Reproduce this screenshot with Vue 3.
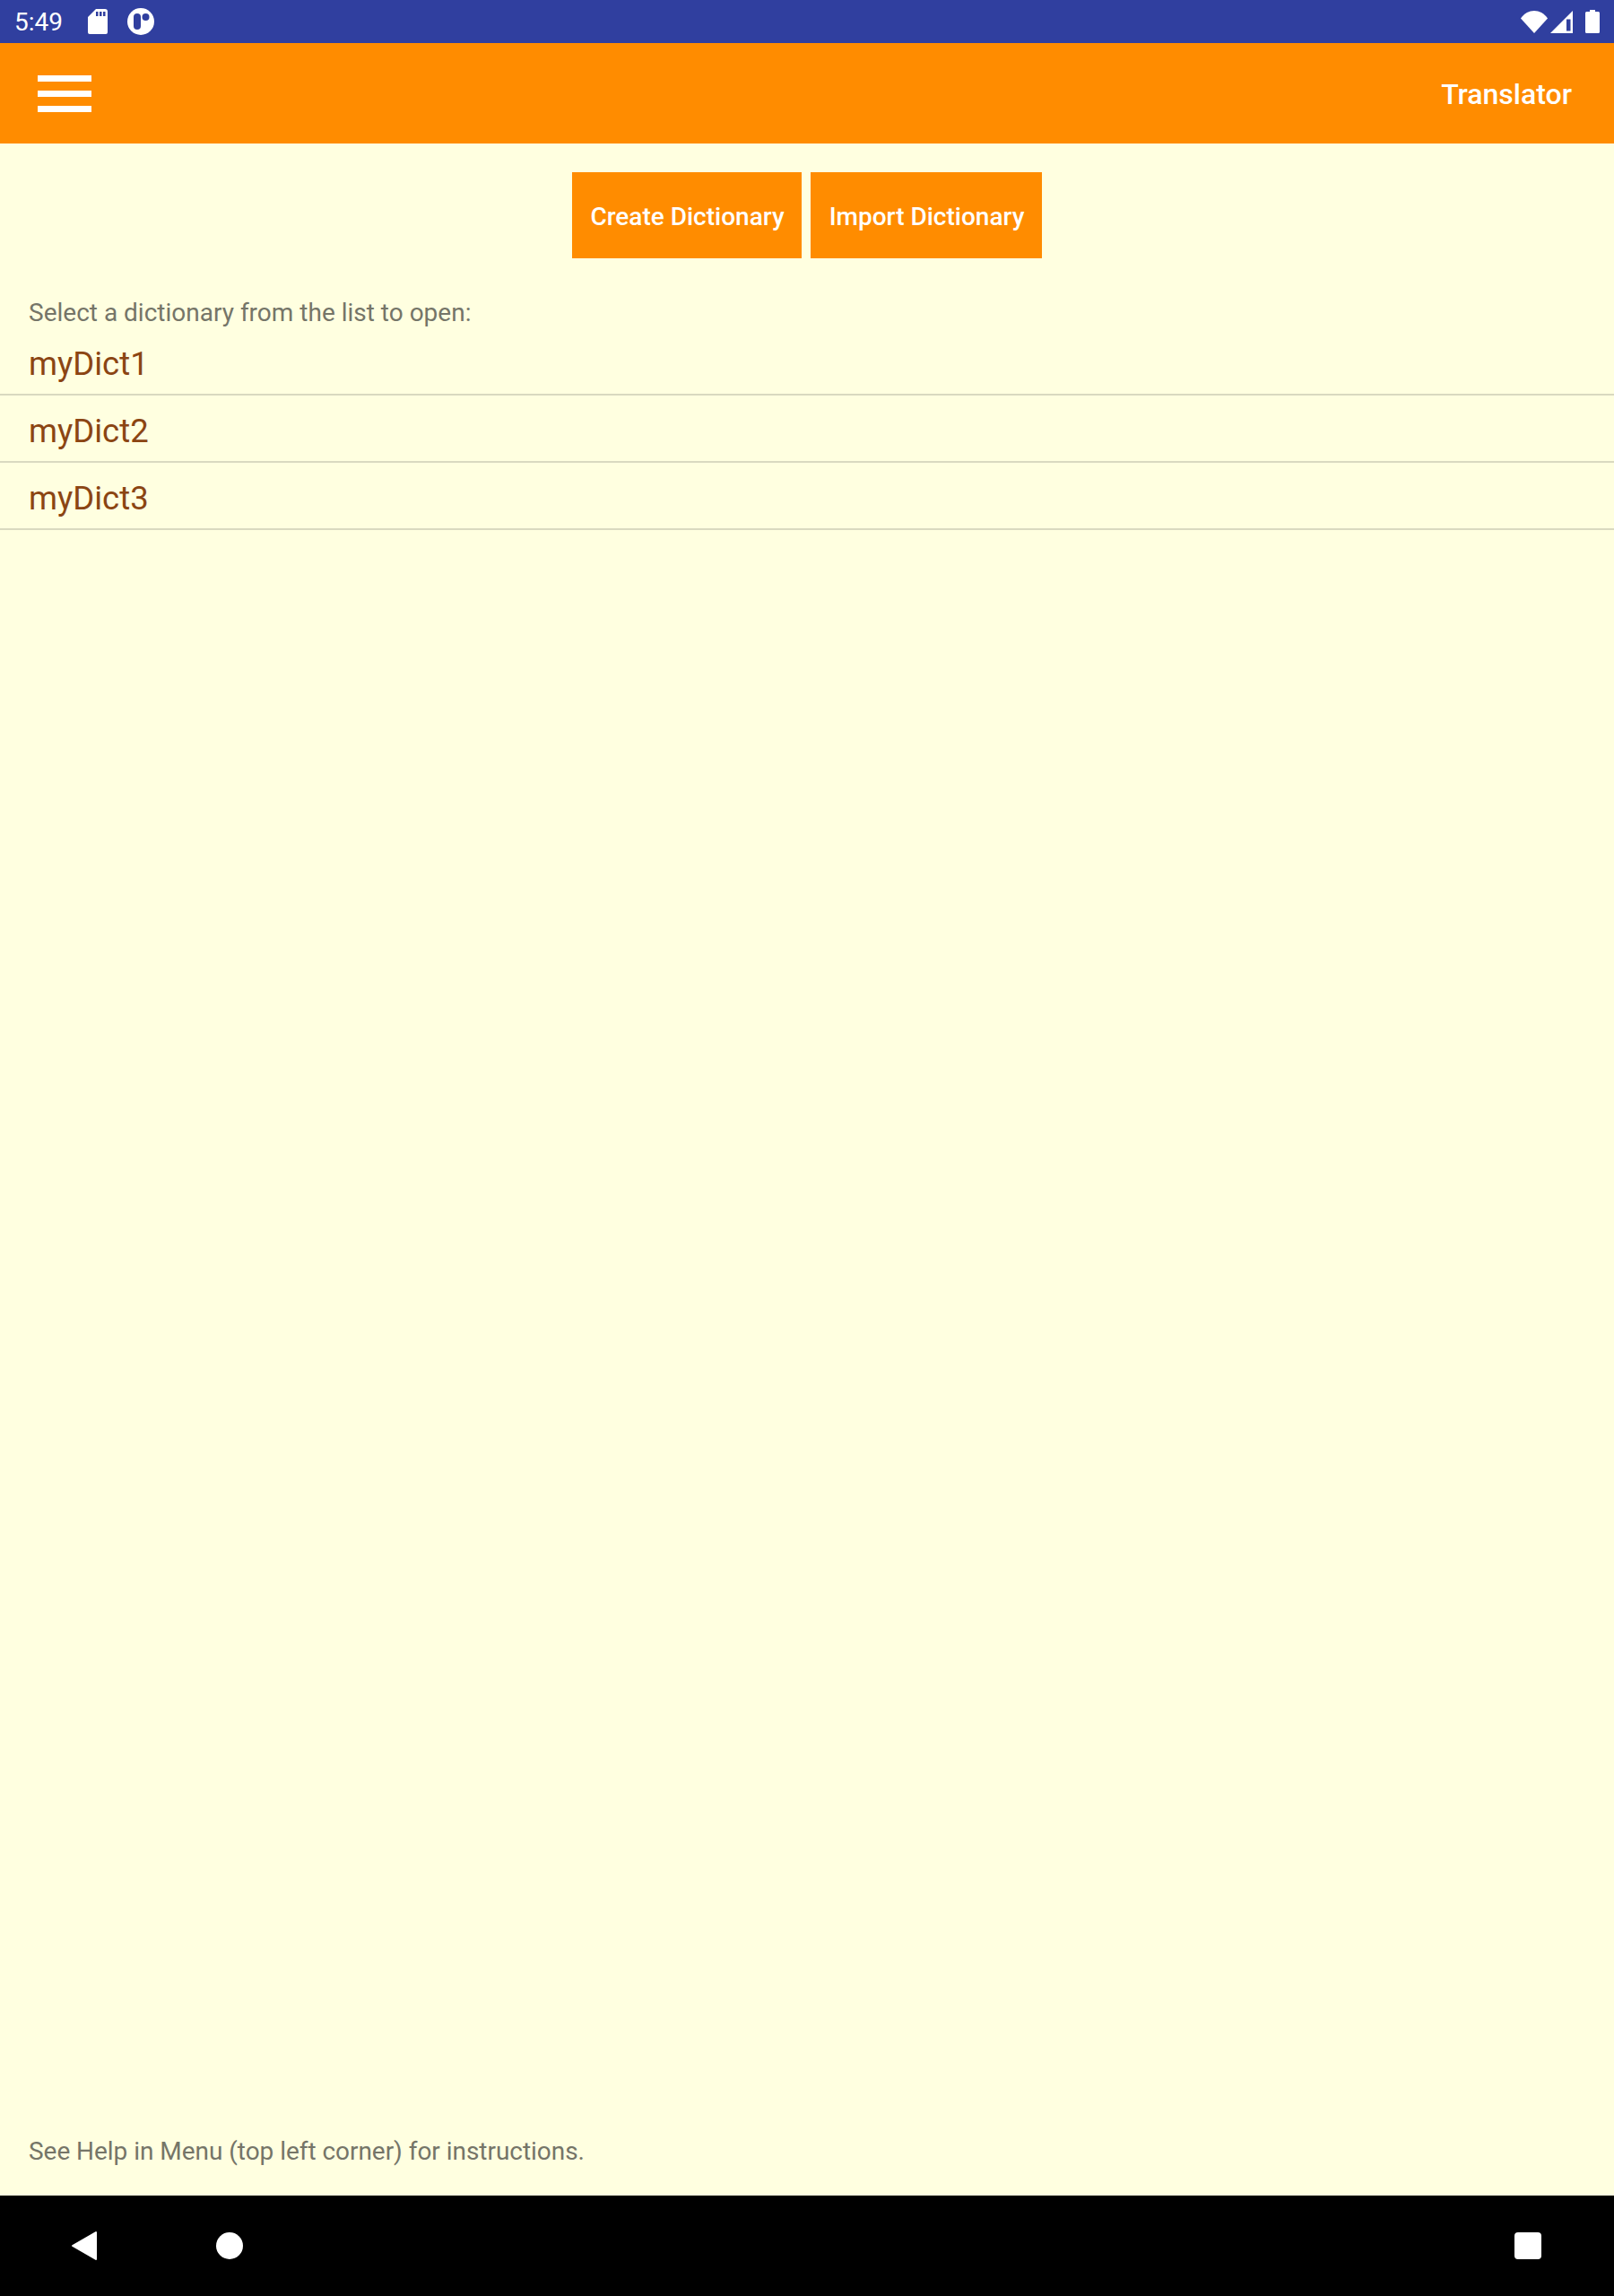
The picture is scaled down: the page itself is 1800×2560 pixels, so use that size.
<script setup>
const dictionaries = ['myDict1', 'myDict2', 'myDict3']
</script>

<template>
  <div class="page">
    <div class="status">
      <span class="time">5:49</span>
      <svg class="sd" width="22" height="28" viewBox="0 0 22 28">
        <path fill="#fff" fill-rule="evenodd" d="M9 0H19a3 3 0 0 1 3 3V26a2 2 0 0 1-2 2H2a2 2 0 0 1-2-2V9ZM9 3V8H11.500V3ZM13 3V8H15.500V3ZM17 3V8H19.500V3Z"/>
      </svg>
      <svg class="app" width="30" height="30" viewBox="0 0 30 30">
        <circle cx="15" cy="15" r="15" fill="#fff"/>
        <rect x="7" y="6" width="8" height="18" rx="4" fill="#303f9f"/>
        <circle cx="20.500" cy="10" r="4" fill="#303f9f"/>
      </svg>
      <div class="status-right">
        <svg width="30" height="25" viewBox="0 0 30 25"><path fill="#fff" d="M0 8.500C8-2.800 22-2.800 30 8.500L15 25Z"/></svg>
        <svg class="signal" width="25" height="25" viewBox="0 0 25 25">
          <path fill="#fff" d="M0 25L25 0V25Z"/>
          <path fill="#303f9f" d="M18 9.500H22.500V22.500H18Z"/>
        </svg>
        <svg class="battery" width="16" height="26" viewBox="0 0 16 26"><path fill="#fff" d="M5 0H11V2H14.500A1.500 1.500 0 0 1 16 3.500V24.500A1.500 1.500 0 0 1 14.500 26H1.500A1.500 1.500 0 0 1 0 24.500V3.500A1.500 1.500 0 0 1 1.500 2H5Z"/></svg>
      </div>
    </div>

    <header class="toolbar">
      <div class="menu"><i></i><i></i><i></i></div>
      <span class="title">Translator</span>
    </header>

    <main class="content">
      <div class="actions">
        <button class="btn first">Create Dictionary</button>
        <button class="btn second">Import Dictionary</button>
      </div>
      <p class="hint">Select a dictionary from the list to open:</p>
      <ul class="list">
        <li v-for="d in dictionaries" :key="d">{{ d }}</li>
      </ul>
      <p class="help">See Help in Menu (top left corner) for instructions.</p>
    </main>

    <nav class="navbar">
      <svg class="back" width="30" height="34" viewBox="0 0 30 34"><path fill="#fff" stroke="#fff" stroke-width="2" stroke-linejoin="round" d="M28 2V32L2 17Z"/></svg>
      <span class="home"></span>
      <span class="recent"></span>
    </nav>
  </div>
</template>

<style>
html, body { margin: 0; padding: 0; }
</style>

<style scoped>
.page {
  width: 1800px;
  height: 2560px;
  display: flex;
  flex-direction: column;
  background: #ffffe0;
  font-family: Roboto, "Liberation Sans", sans-serif;
}
.status {
  height: 48px;
  flex: none;
  background: #303f9f;
  display: flex;
  align-items: center;
  padding: 0 16px;
  box-sizing: border-box;
  color: #fff;
}
.time { font-size: 28px; width: 82px; }
.sd { margin-right: 22px; }
.status-right {
  margin-left: auto;
  display: flex;
  align-items: center;
}
.signal { margin-left: 3px; }
.battery { margin-left: 14px; }
.toolbar {
  height: 112px;
  flex: none;
  background: #ff8c00;
  display: flex;
  align-items: center;
  justify-content: space-between;
  padding: 0 47px 0 42px;
  box-sizing: border-box;
}
.menu { display: flex; flex-direction: column; gap: 10px; width: 60px; }
.menu i { display: block; height: 7px; background: #fff; }
.title { color: #fff; font-size: 32px; font-weight: 500; padding-top: 1px; }
.content {
  flex: 1;
  display: flex;
  flex-direction: column;
  min-height: 0;
}
.actions {
  display: flex;
  justify-content: center;
  gap: 10px;
  margin-top: 32px;
}
.btn {
  height: 96px;
  border: 0;
  padding: 2px 0 0 1px;
  background: #ff8c00;
  color: #fff;
  font-family: inherit;
  font-size: 28px;
  font-weight: 500;
}
.first { width: 256px; }
.second { width: 258px; }
.hint {
  margin: 44px 0 1px;
  padding-left: 32px;
  font-size: 28px;
  line-height: 33px;
  color: #757568;
}
.list { list-style: none; margin: 0; padding: 0; }
.list li {
  height: 75px;
  box-sizing: border-box;
  padding: 15px 0 0 32px;
  border-bottom: 2px solid #d9d9c0;
  font-size: 36.500px;
  line-height: 50px;
  color: #8b4513;
}
.help {
  margin: auto 0 33px;
  padding-left: 32px;
  font-size: 28px;
  line-height: 32px;
  letter-spacing: -0.040px;
  color: #757568;
}
.navbar {
  height: 112px;
  flex: none;
  background: #000;
  display: flex;
  align-items: center;
}
.back { margin-left: 79px; }
.home {
  width: 30px;
  height: 30px;
  margin-left: 132px;
  border-radius: 50%;
  background: #fff;
}
.recent {
  width: 30px;
  height: 30px;
  margin-left: auto;
  margin-right: 81px;
  border-radius: 4px;
  background: #fff;
}
</style>
